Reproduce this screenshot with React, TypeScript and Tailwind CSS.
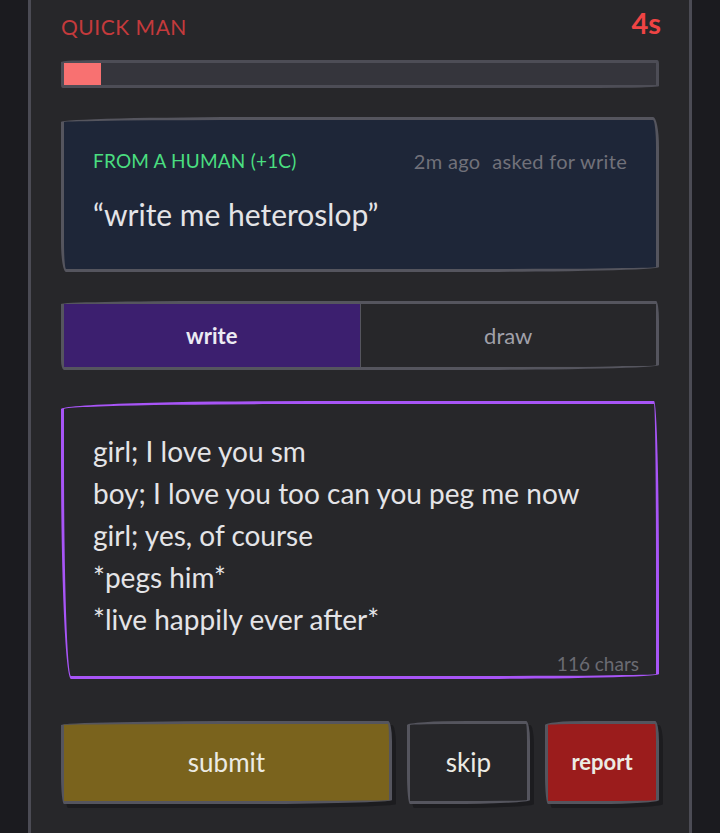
import React from "react";

const lines = [
  "girl; I love you sm",
  "boy; I love you too can you peg me now",
  "girl; yes, of course",
  "*pegs him*",
  "*live happily ever after*",
];

export default function App() {
  return (
    <div className="h-[833px] w-[720px] overflow-hidden bg-[#1b1b1f] font-['Lato',sans-serif]">
      <div className="mx-[28px] h-full border-x-[3px] border-[#4b4b54] bg-[#27272a] px-[30px]">
        {/* header */}
        <div className="flex items-start justify-between pt-[6px]">
          <span className="mt-[9px] text-[21px] leading-[24px] tracking-wide text-[#c43a3c]">QUICK MAN</span>
          <span className="mr-[-2px] text-[29px] font-bold leading-[34px] text-[#ef4444]">4s</span>
        </div>

        {/* timer bar */}
        <div className="mt-[20px] h-[28px] border-[3px] border-[#4d4d56] bg-[#35353c] rounded-[40px_2px_60px_2px/2px_4px_2px_3px]">
          <div className="h-full w-[37px] bg-[#f87171]" />
        </div>

        {/* prompt card */}
        <div className="mt-[29px] h-[155px] border-[3px] border-[#55555e] bg-[#1e2638] px-[29px] pt-[30px] rounded-[200px_6px_200px_5px/5px_30px_5px_30px]">
          <div className="flex items-center justify-between leading-[22px]">
            <span className="text-[19px] tracking-[0.2px] text-[#4ade80]">FROM A HUMAN (+1C)</span>
            <span className="text-[20px] tracking-[0.3px] text-[#71717a]">
              2m ago<span className="ml-[12px]">asked for write</span>
            </span>
          </div>
          <div className="mt-[25px] text-[30px] leading-[34px] text-[#e4e4e7]">“write me heteroslop”</div>
        </div>

        {/* mode tabs */}
        <div className="mt-[29px] flex h-[69px] overflow-hidden border-[3px] border-[#55555e] rounded-[150px_3px_200px_3px/3px_20px_5px_10px]">
          <div className="flex flex-1 items-center justify-center border-r border-[#55555e] bg-[#3c1f6f] text-[22px] font-bold text-[#ecebf3]">
            write
          </div>
          <div className="flex flex-1 items-center justify-center bg-[#27272a] text-[22px] text-[#a1a1aa]">draw</div>
        </div>

        {/* writing area */}
        <div className="relative mt-[31px] h-[278px] border-[3px] border-[#a855f7] bg-[#27272a] px-[29px] pt-[26px] rounded-[250px_5px_200px_10px/8px_180px_5px_220px]">
          {lines.map((l) => (
            <div key={l} className="text-[28px] leading-[42px] text-[#e4e4e7]">
              {l}
            </div>
          ))}
          <span className="absolute bottom-[0px] right-[17px] text-[19px] leading-[24px] text-[#6b6b73]">116 chars</span>
        </div>

        {/* actions */}
        <div className="mt-[42px] flex h-[83px] gap-[15px]">
          <button className="flex w-[331px] items-center justify-center border-[3px] border-[#55555e] bg-[#7a631d] text-[26px] text-[#ecebe4] shadow-[4px_4px_0_#1c1c1f] rounded-[200px_4px_150px_3px/4px_20px_4px_30px]">
            submit
          </button>
          <button className="flex w-[123px] items-center justify-center border-[3px] border-[#55555e] bg-[#27272a] text-[26px] text-[#ecebe4] shadow-[4px_4px_0_#1c1c1f] rounded-[60px_4px_80px_3px/4px_20px_4px_30px]">
            skip
          </button>
          <button className="flex flex-1 items-center justify-center border-[3px] border-[#55555e] bg-[#9b1c1c] pb-[2px] text-[22px] font-bold text-[#ecebe4] shadow-[4px_4px_0_#1c1c1f] rounded-[40px_4px_60px_3px/4px_20px_4px_30px]">
            report
          </button>
        </div>
      </div>
    </div>
  );
}
